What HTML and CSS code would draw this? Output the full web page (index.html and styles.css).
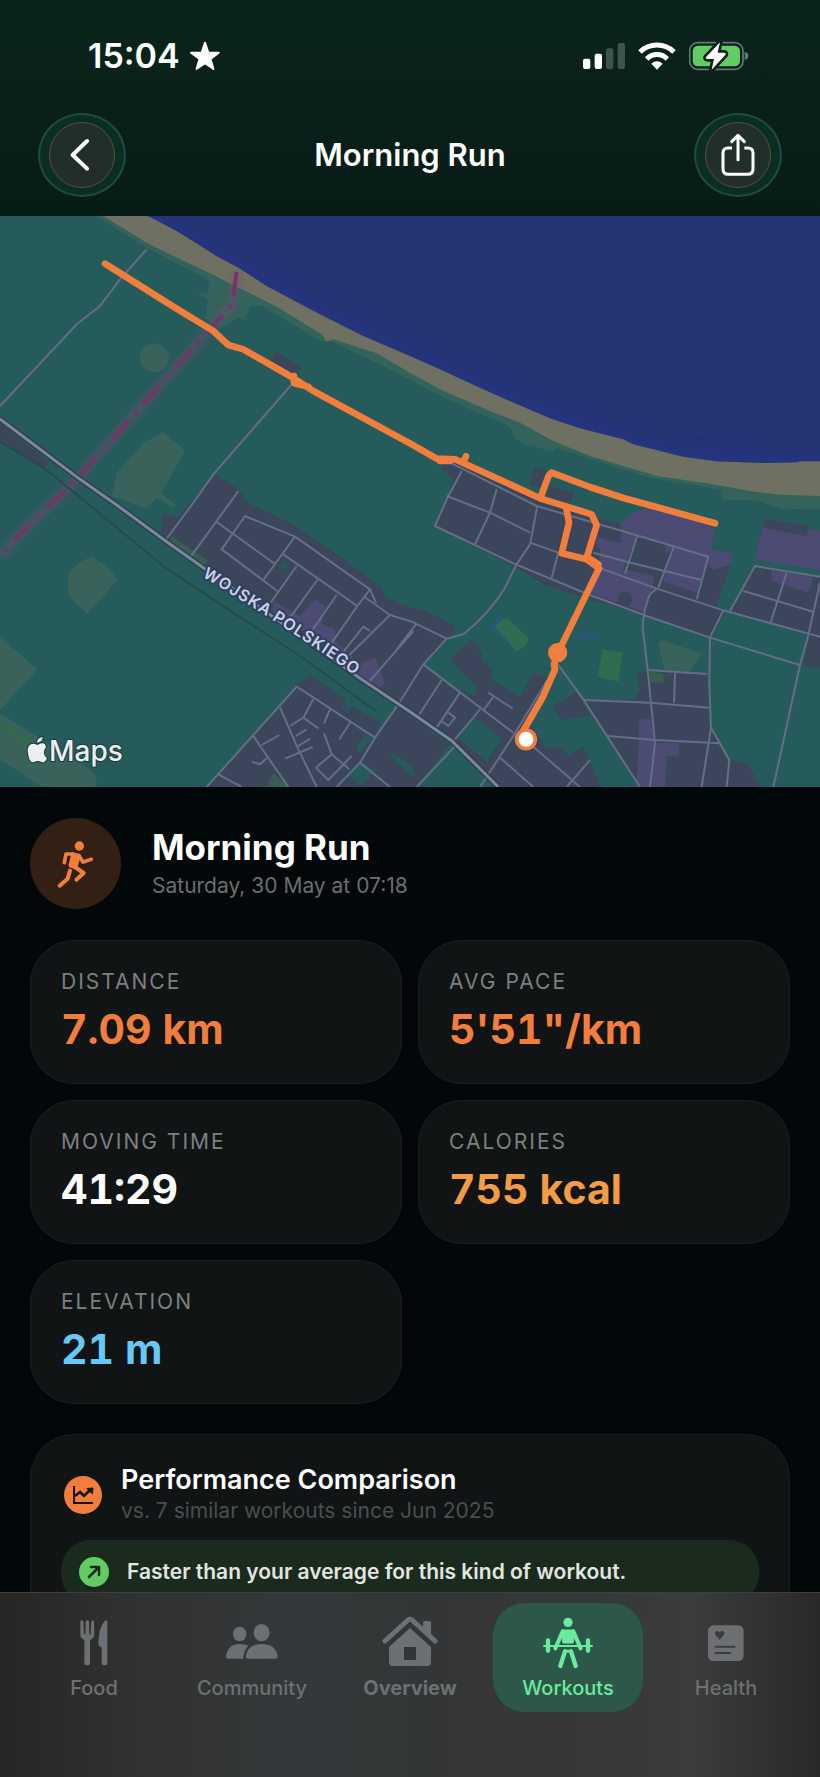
FILE: index.html
```html
<!DOCTYPE html>
<html lang="en">
<head>
    <meta charset="utf-8">
    <meta name="viewport" content="width=device-width, initial-scale=1">
    <title>Morning Run</title>
    <link rel="stylesheet" href="styles.css">
</head>
<body>
    <header>
        <div class="status-bar">
            <div class="status-left">
                <span class="time">15:04</span>
                <svg width="32" height="30" viewBox="500 58 94 92" fill="#fff" stroke="#fff" stroke-width="6" stroke-linejoin="round"><path d="M547 63 L557 93 L589 94 L564 113 L573 144 L547 126 L521 144 L530 113 L504 94 L537 93 Z"/></svg>
            </div>
            <div class="status-right">
                <svg width="42" height="28" viewBox="66 63 126 84" fill="#fff">
                    <rect x="66" y="113" width="22" height="31" rx="6"/>
                    <rect x="101" y="98" width="22" height="46" rx="6"/>
                    <rect x="135" y="82" width="22" height="62" rx="6" opacity=".22"/>
                    <rect x="170" y="66" width="22" height="78" rx="6" opacity=".22"/>
                </svg>
                <svg width="38" height="28" viewBox="232 62 114 84" fill="none" stroke="#fff" stroke-width="15">
                    <path d="M238 92 A73 73 0 0 1 340 92"/>
                    <path d="M258 113 A43 43 0 0 1 320 113"/>
                    <path d="M272 127 Q289 113 306 127 L289 145 Z" fill="#fff" stroke="none"/>
                </svg>
                <svg width="60" height="30" viewBox="387 60 180 90">
                    <rect x="389" y="65" width="160" height="80" rx="24" fill="none" stroke="#5f7a73" stroke-width="5"/>
                    <path d="M554 93 Q565 94 565 105 Q565 116 554 117 Z" fill="#5f7a73"/>
                    <rect x="398" y="74" width="142" height="62" rx="16" fill="#63cb63"/>
                    <path d="M480 64 L438 108 Q436 114 443 114 L462 114 L455 146 L496 102 Q499 95 492 95 L473 95 Z" fill="#fff" stroke="#0a2019" stroke-width="16" stroke-linejoin="round" paint-order="stroke"/>
                </svg>
            </div>
        </div>
        <div class="title-bar">
            <button class="round-button" aria-label="Back">
                <span><svg width="24" height="34" viewBox="150 353 72 102" fill="none" stroke="#fff" stroke-width="12" stroke-linecap="round" stroke-linejoin="round"><path d="M201 362 L158 404 L201 445"/></svg></span>
            </button>
            <h2>Morning Run</h2>
            <button class="round-button" aria-label="Share">
                <span><svg width="34" height="44" viewBox="482 342 102 132" fill="none" stroke="#fff" stroke-width="9" stroke-linecap="round" stroke-linejoin="round"><path d="M515 387 H503 Q488 387 488 402 V450 Q488 466 504 466 H562 Q578 466 578 450 V402 Q578 387 563 387 H552" stroke-linecap="butt"/><path d="M533 422 V350 M514 368 L533 349 L552 368"/></svg></span>
            </button>
        </div>
    </header>

    <main>
        <svg class="map" viewBox="0 0 2460 1713" role="img" aria-label="Map of the route">
            <defs>
                <path id="street" d="M606 1082 Q835 1216 1100 1402"/>
                <filter id="glow"><feGaussianBlur stdDeviation="6"/></filter>
                <filter id="shore"><feGaussianBlur stdDeviation="22"/></filter>
                <clipPath id="seaClip"><path d="M445 0 L530 45 L650 120 L715 155 L800 210 L960 295 L1090 360 L1230 420 L1310 455 L1440 515 L1530 555 L1650 607 L1740 637 L1870 670 L1900 685 L2050 722 L2150 736 L2300 741 L2390 739 L2400 736 L2460 736 V0 Z"/></clipPath>
            </defs>
            <rect width="2460" height="1713" fill="#255b5a"/>

            <!-- beach and sea -->
            <path d="M290 0 L440 95 L600 178 L626 195 L618 308 L640 320 L660 340 L712 305 L735 312 L750 270 L782 268 L960 374 L1000 378 L1230 492 L1330 545 L1530 632 L1545 665 L1570 683 L1660 707 L1670 697 L1950 785 L2165 822 L2165 850 L2270 855 L2350 880 L2460 878 V700 L1230 400 L460 0 Z" fill="#33635a"/>
            <path d="M592 235 L625 230 L625 250 Z" fill="#33635a"/>
            <path d="M310 0 L440 80 L520 120 L630 172 L710 212 L830 272 L965 355 L978 376 L1000 370 L1130 412 L1230 470 L1330 525 L1470 585 L1560 620 L1660 675 L1770 720 L1970 780 L2130 803 L2250 825 L2340 836 L2460 840 V600 L1230 300 L440 0 Z" fill="#6e7062"/>
            <g clip-path="url(#seaClip)">
                <rect width="2460" height="800" fill="#253474"/>
                <path d="M445 0 L715 155 L960 295 L1230 420 L1530 555 L1870 680 L2050 722 L2300 741 H2460" fill="none" stroke="#253588" stroke-width="40" opacity=".8" filter="url(#shore)"/>
            </g>

            <!-- fields -->
            <g fill="#38625a">
                <circle cx="463" cy="426" r="44"/>
                <path d="M490 648 L555 703 L485 832 L530 869 L515 872 L470 845 L440 877 L410 868 L335 840 L350 770 L430 680 Z"/>
                <path d="M203 1075 Q240 1030 275 1024 L305 1040 L355 1090 L262 1194 L215 1150 Q200 1130 203 1075 Z"/>
                <path d="M0 1264 L113 1360 L10 1472 L0 1480 Z"/>
                <path d="M0 1492 L270 1660 Q300 1680 285 1713 H125 L0 1630 Z"/>
                <path d="M1985 1272 L2105 1312 L2070 1368 H1995 L1975 1285 Z"/>
            </g>
            <path d="M15 1520 L95 1575 L75 1585 L5 1535 Z" fill="#2f6b4c"/>

            <!-- built-up areas -->
            <g fill="#3b465a">
                <path d="M0 622 L150 740 L130 757 L0 678 Z"/>
                <path d="M828 405 L904 452 L888 482 L810 435 Z"/>
                <path d="M650 778 L715 820 L745 862 L880 925 L1140 1108 L1155 1142 L1230 1176 L1270 1182 L1360 1227 L1365 1257 L1340 1272 L1270 1345 L1350 1405 L1425 1442 L1430 1412 L1350 1332 L1415 1270 L1445 1312 L1445 1332 L1480 1362 L1470 1387 L1560 1442 L1600 1372 L1640 1382 L1590 1520 L1640 1600 L1680 1592 L1705 1620 L1750 1592 L1770 1630 L1800 1713 H1495 L1355 1574 L1230 1487 L1080 1387 L610 1060 L480 970 L490 890 L530 905 L570 860 Z"/>
                <path d="M890 1407 L930 1379 L1035 1450 L1035 1490 L1055 1470 L1140 1517 L1125 1560 L1195 1465 L1230 1500 L1350 1585 L1250 1713 H615 L760 1560 L840 1475 Z"/>
                <path d="M1305 930 L1340 850 L1360 790 L1325 760 L1325 742 L1370 738 L1480 790 L1600 840 L1780 905 L1880 925 L1930 875 L2145 945 L2135 1000 L2195 1010 L2190 1050 L2150 1170 L2175 1185 L2135 1265 L1935 1200 L1640 1110 L1540 1050 Z"/>
                <path d="M1605 752 L1640 762 L1630 815 L1585 807 Z M1650 810 L1722 828 L1712 865 L1640 840 Z"/>
                <path d="M2265 1050 L2460 1085 V1355 L2410 1350 L2425 1258 L2190 1185 Z"/>
                <path d="M1658 1470 L1730 1427 L1770 1500 L1685 1512 Z"/>
                <path d="M1750 1452 H1900 L1920 1425 L1910 1367 L2120 1372 L2130 1540 L2190 1630 L2240 1642 L2285 1713 H1920 L1830 1572 Z"/>
            </g>
            <g fill="#4c4b73">
                <path d="M1860 920 L1900 890 L1940 875 L2145 935 L2135 1000 L2197 1012 L2192 1045 L2140 1062 L2120 1040 L2105 1085 L2090 1130 L1990 1098 L2015 1000 L2000 1010 L1910 962 L1870 1060 L1960 1080 L1960 1105 L1935 1190 L1770 1130 L1800 1050 L1800 1000 L1785 985 L1800 950 L1865 980 Z"/>
                <path d="M2290 918 L2460 945 V1062 L2265 1032 Z"/>
                <path d="M2315 1062 L2440 1085 L2425 1130 L2315 1095 Z"/>
                <path d="M1918 1512 L1950 1507 L1965 1582 L2038 1580 L2035 1617 L2000 1622 L1995 1713 H1910 Z"/>
                <path d="M820 1155 L900 1200 L945 1150 L975 1170 L965 1225 L1005 1240 L1005 1275 L1080 1345 L1125 1325 L1155 1400 L1140 1415 L1080 1380 L960 1275 L820 1190 Z"/>
            </g>
            <g fill="#3b465a">
                <path d="M2290 908 L2425 930 L2420 960 L2290 935 Z M1795 930 L1865 952 L1858 982 L1790 962 Z M1910 962 L2000 985 L1990 1058 L1885 1030 Z"/>
                <circle cx="1875" cy="1150" r="22"/>
            </g>
            <g fill="#255b5a">
                <path d="M1420 1502 L1505 1567 L1460 1637 L1375 1567 Z M1085 1635 L1125 1665 L1085 1710 L1045 1680 Z M1100 1545 L1120 1560 L1080 1610 L1065 1600 Z M1180 1610 L1240 1655 V1685 L1170 1620 Z M855 1028 L865 1050 L850 1062 L835 1050 Z"/>
            </g>
            <path d="M515 960 L625 1035 L615 1050 L505 978 Z M820 1672 L865 1713 H800 Z M1950 1367 L1990 1375 V1400 L1950 1397 Z" fill="#36654f" opacity=".8"/>
            <path d="M1495 1195 L1590 1270 L1550 1310 L1470 1235 Z M1730 1250 H1790 V1270 H1730 Z" fill="#285677"/>
            <path d="M1520 1205 L1585 1265 Q1590 1290 1550 1305 L1485 1235 Q1490 1215 1520 1205 Z M1808 1300 L1868 1310 L1855 1397 L1793 1382 Z" fill="#2f6c50"/>

            <!-- boundary -->
            <path d="M710 167 L697 265 L545 435 L230 790 L60 955 L0 1025" fill="none" stroke="#82487a" stroke-width="34" opacity=".32" filter="url(#glow)"/>
            <path d="M710 167 L697 265 L545 435 L230 790 L60 955 L0 1025" fill="none" stroke="#743568" stroke-width="12" stroke-dasharray="74 28 12 28"/>

            <!-- roads -->
            <path d="M0 677 L130 755 L250 852 L490 1050 L700 1190 L900 1320 L1130 1487" fill="none" stroke="#274a4c" stroke-width="6"/>
            <g fill="none" stroke="#646e86" stroke-width="6" stroke-linejoin="round">
                <path d="M0 570 L230 325 L300 270 L360 190 L440 100"/>
                <path d="M875 505 L640 775 L575 867 L497 972 M715 825 L690 860 L570 1025 M650 918 L825 1044"/>
                <path d="M885 962 L735 900 L665 1000 L832 1125 M885 962 L790 1092 M885 962 L1110 1120 L1128 1160 M850 1015 L1072 1170 L1110 1120 M890 1050 L805 1170 M952 1092 L870 1205 M1010 1137 L925 1260 M1072 1170 L985 1295 M1090 1140 L1170 1197 L1045 1320 L1032 1305 L1090 1232 L1110 1245 M1170 1197 L1235 1217 L1340 1268 M1240 1245 L1105 1400 M1250 1222 L1190 1300"/>
                <path d="M620 1713 L890 1412 L1125 1565 L1195 1465 L1270 1345 L1340 1268 L1390 1255 Q1470 1190 1515 1115 L1550 1045 L1590 985 L1612 870"/>
                <path d="M840 1475 L895 1600 L950 1713 M760 1560 L865 1713 M655 1675 L725 1713 M940 1450 L910 1505 L955 1537 M910 1505 L870 1530 M990 1480 L972 1522 M1052 1517 L1018 1570 M785 1587 L838 1557 M888 1560 L920 1540 M895 1590 L930 1568 M855 1628 L938 1593 M972 1552 L995 1615 L948 1655 L985 1692 L1055 1620 M995 1615 L1048 1660 M755 1637 L780 1645 L802 1625 M1125 1565 L1080 1640 L1010 1713 M1080 1640 L1170 1713"/>
                <path d="M1385 765 L1340 850 L1305 930 L1540 1042 L1770 1137 L1940 1200 L2130 1265 L2400 1347 M1340 840 L1470 890 L1590 950 M1490 820 L1470 890 L1425 985 M1350 740 L1610 870 L1900 955 L2125 1022 L2090 1150 M1590 980 L1675 1010 M1675 1010 L1655 1085 M1780 1010 L1880 1037 L2105 1092 M1912 960 L1875 1072 M2022 990 L1975 1115 M1795 1055 L1970 1118 L2170 1183 L2460 1262"/>
                <path d="M1970 1118 L1950 1135 Q1930 1180 1928 1235 L1943 1362 L1965 1580 L1950 1713 M2170 1183 L2130 1265 L2128 1400 L2133 1535 L2105 1713 M2133 1535 L2188 1632 L2180 1713 M1943 1362 L2120 1374 M2025 1370 L2022 1460 M1750 1452 L1950 1460 L2128 1475 M1825 1560 L1965 1572 L2160 1582"/>
                <path d="M2190 1185 L2265 1050 L2460 1082 M2230 1125 L2440 1187 M2360 1070 L2310 1225 M2460 1100 L2425 1258 L2400 1347 L2320 1713"/>
                <path d="M1670 1340 L1750 1450 L1920 1713 M1640 1395 L1540 1560 L1440 1713 M1500 1625 L1600 1713 M1600 1592 L1740 1713 M1770 1632 L1700 1713 M1270 1345 L1540 1550 M1325 1392 L1255 1500 M1380 1430 L1310 1535 M1440 1480 L1365 1570 M1465 1430 L1538 1478 M1482 1440 L1452 1480 M1370 1585 L1250 1713 M1345 1490 L1365 1505 L1345 1530 L1325 1515"/>
            </g>
            <path d="M0 609 L240 790 L350 867 L497 975 L610 1055 L1080 1387 L1230 1487 L1355 1574 L1495 1713" fill="none" stroke="#2c3d50" stroke-width="17"/>
            <path d="M0 609 L240 790 L350 867 L497 975 L610 1055 L1080 1387 L1230 1487 L1355 1574 L1495 1713" fill="none" stroke="#7b889c" stroke-width="9"/>
            <text class="street-name"><textPath href="#street">WOJSKA POLSKIEGO</textPath></text>

            <!-- route -->
            <g fill="none" stroke="#f27e3e" stroke-width="20" stroke-linecap="round" stroke-linejoin="round">
                <path d="M315 143 L520 272 L640 345 L685 387 L730 400 L870 480 L940 525 L1230 682 L1310 728 L1365 730 L1480 782 L1620 847 L1775 895 L1790 927 L1760 1025"/>
                <path d="M882 480 L882 502 L925 512 M1390 737 L1398 721 M1320 735 H1350"/>
                <path d="M1622 843 L1646 779 L1655 770 L1770 813 L1870 846 L1980 876 L2145 922"/>
                <path d="M1700 882 L1707 920 L1685 1012 L1760 1030 L1797 1057 L1673 1312 L1662 1345 L1665 1360 L1630 1440 L1568 1548"/>
                <path d="M1760 1022 L1795 1045"/>
            </g>
            <circle cx="1673" cy="1310" r="29" fill="#f27e3e"/>
            <circle cx="1578" cy="1570" r="28" fill="#fff" stroke="#f27e3e" stroke-width="11"/>

            <!-- attribution -->
            <path d="M113 1587 Q121 1580 130 1582 Q137 1584 138 1594 Q130 1602 132 1612 Q133 1622 141 1626 Q134 1643 125 1638 Q113 1631 101 1639 Q86 1640 83 1604 Q84 1583 100 1583 Q107 1584 113 1587 Z M111 1580 Q111 1566 128 1563 Q128 1578 111 1580 Z" class="logo"/>
            <text class="maps" x="147" y="1636">Maps</text>
        </svg>

        <section class="heading">
            <div class="avatar">
                <svg width="40" height="50" viewBox="170 145 120 150" fill="none" stroke="#f27e3e" stroke-linecap="round" stroke-linejoin="round">
                    <circle cx="240" cy="166" r="14" fill="#f27e3e" stroke="none"/>
                    <path d="M222 192 L214 224 L228 228 L238 196 Z" fill="#f27e3e" stroke-width="13"/>
                    <path d="M222 190 L200 190 L195 216" stroke-width="11"/>
                    <path d="M238 194 L251 214 L276 206" stroke-width="11"/>
                    <path d="M222 226 L253 247 L231 267" stroke-width="12"/>
                    <path d="M212 240 L205 264 L181 285" stroke-width="12"/>
                </svg>
            </div>
            <div>
                <h1>Morning Run</h1>
                <p class="date">Saturday, 30 May at 07:18</p>
            </div>
        </section>

        <section class="stats">
            <div class="card">
                <p class="label">DISTANCE</p>
                <p class="value orange">7.09 km</p>
            </div>
            <div class="card">
                <p class="label">AVG PACE</p>
                <p class="value orange">5'51"/km</p>
            </div>
            <div class="card">
                <p class="label">MOVING TIME</p>
                <p class="value">41:29</p>
            </div>
            <div class="card">
                <p class="label">CALORIES</p>
                <p class="value amber">755 kcal</p>
            </div>
            <div class="card">
                <p class="label">ELEVATION</p>
                <p class="value blue">21 m</p>
            </div>
        </section>

        <section class="card comparison">
            <div class="comparison-head">
                <svg width="38" height="38" viewBox="0 0 38 38" fill="none" stroke="#15150f" stroke-width="2">
                    <circle cx="19" cy="19" r="19" fill="#f27e3e" stroke="none"/>
                    <path d="M10 10 V27 H29"/>
                    <path d="M11 20 L16 16 L20 20 L26 14" stroke-width="2.5"/>
                    <path d="M23 12.500 L29 12 L28.500 18 Z" fill="#15150f" stroke-width="1"/>
                </svg>
                <div>
                    <h3>Performance Comparison</h3>
                    <p class="subtitle">vs. 7 similar workouts since Jun 2025</p>
                </div>
            </div>
            <div class="verdict">
                <svg width="30" height="30" viewBox="0 0 30 30" fill="none" stroke="#1a2b1c" stroke-width="2.500" stroke-linecap="round" stroke-linejoin="round">
                    <circle cx="15" cy="15" r="15" fill="#63cb63" stroke="none"/>
                    <path d="M10 20 L20 10 M12 10 H20 V18"/>
                </svg>
                <p>Faster than your average for this kind of workout.</p>
            </div>
        </section>
    </main>

    <nav>
        <a href="#food">
            <svg width="56" height="56" viewBox="200 77 168 168" fill="currentColor">
                <path d="M243 97 Q247 89 252 97 L254 135 H258 L259 97 Q264 89 269 97 L270 135 H274 L276 97 Q281 89 284 97 L285 135 Q285 148 272 152 V220 Q272 228 263 228 Q255 228 255 220 V152 Q243 148 243 135 Z"/>
                <path d="M324 97 V221 Q324 228 315 228 Q307 228 307 221 V174 Q297 171 297 163 Q298 112 317 94 Q323 92 324 97 Z"/>
            </svg>
            Food
        </a>
        <a href="#community">
            <svg width="56" height="56" viewBox="672 77 168 168" fill="currentColor">
                <ellipse cx="719" cy="134" rx="20" ry="22"/>
                <ellipse cx="785" cy="130" rx="24" ry="26"/>
                <path d="M678 200 Q684 164 719 164 Q733 164 745 170 Q731 184 729 208 H686 Q678 208 678 200 Z"/>
                <path d="M737 200 Q744 164 785 164 Q826 164 833 200 Q833 208 825 208 H745 Q737 208 737 200 Z"/>
            </svg>
            Community
        </a>
        <a href="#overview" class="bold">
            <svg width="56" height="56" viewBox="382 1617 56 56" fill="currentColor">
                <path d="M385 1643 L408 1622 Q410 1620 412 1622 L435 1643" fill="none" stroke="currentColor" stroke-width="5" stroke-linecap="round" stroke-linejoin="round"/>
                <path d="M423 1632 V1625 Q423 1623 425 1623 H429 Q431 1623 431 1625 V1639 Z"/>
                <path fill-rule="evenodd" d="M410 1630 L431 1649 V1664 Q431 1668 427 1668 H393 Q389 1668 389 1664 V1649 Z M404 1649 V1662 H416 V1649 Z"/>
            </svg>
            Overview
        </a>
        <a href="#workouts" class="active" aria-current="page">
            <svg width="56" height="56" viewBox="389 77 168 168" fill="currentColor" stroke="currentColor" stroke-linecap="round" stroke-linejoin="round">
                <circle cx="473" cy="99" r="14" stroke="none"/>
                <path d="M459 125 H487 L486 158 H460 Z" stroke-width="9"/>
                <path d="M457 126 L435 177 M489 126 L511 177" fill="none" stroke-width="12"/>
                <path d="M401 170 H545" fill="none" stroke-width="6"/>
                <path d="M413 153 V184 M533 153 V184" fill="none" stroke-width="13"/>
                <path d="M464 186 L450 230 M482 186 L496 230" fill="none" stroke-width="13"/>
                <path d="M458 187 L464 181 H482 L488 187 L473 190 Z" stroke="none"/>
            </svg>
            Workouts
        </a>
        <a href="#health">
            <svg width="56" height="56" viewBox="863 77 168 168" fill="currentColor">
                <rect x="893" y="108" width="107" height="107" rx="16"/>
                <path d="M928 151 L916 138 Q911 130 917 126 Q924 122 928 130 Q932 122 939 126 Q945 130 940 138 Z" fill="#3b3d3d"/>
                <path d="M916 172 H973 M916 191 H960" fill="none" stroke="#3b3d3d" stroke-width="6" stroke-linecap="round"/>
            </svg>
            Health
        </a>
    </nav>
</body>
</html>
```
FILE: styles.css
```css
* {
    box-sizing: border-box;
}
body {
    margin: 0;
    height: 100vh;
    display: flex;
    flex-direction: column;
    overflow: hidden;
    font-family: Inter, 'Liberation Sans', sans-serif;
    color: #fff;
    background: linear-gradient(#020c07, #020709 55%, #010607);
}
h1, h2, h3, p {
    margin: 0;
}
svg {
    display: block;
    flex-shrink: 0;
}
header {
    flex-shrink: 0;
    padding-bottom: 19px;
    background: linear-gradient(#0a241b, #081c17);
}
.status-bar {
    height: 112px;
    padding: 0 71px 0 88px;
    display: flex;
    align-items: center;
    justify-content: space-between;
}
.status-left {
    display: flex;
    align-items: center;
    gap: 9px;
}
.time {
    font-size: 34px;
    font-weight: 600;
    line-height: 40px;
}
.status-right {
    display: flex;
    align-items: center;
    gap: 13px;
}
.title-bar {
    height: 85px;
    padding: 0 38px;
    display: flex;
    align-items: center;
    justify-content: space-between;
}
h2 {
    font-size: 31px;
    font-weight: 600;
}
.round-button {
    width: 88px;
    height: 84px;
    padding: 0;
    display: flex;
    align-items: center;
    justify-content: center;
    border: 2px solid #1f4c3d;
    border-radius: 50%;
    background: #0b2e24;
}
.round-button span {
    width: 66px;
    height: 66px;
    display: flex;
    align-items: center;
    justify-content: center;
    border: 1px solid #5c4d38;
    border-radius: 50%;
    background: #222e2a;
}
main {
    flex: 1;
    min-height: 0;
    overflow-y: auto;
    scrollbar-width: none;
}
.map {
    width: 100%;
    height: auto;
}
.street-name {
    font-size: 48px;
    font-weight: 600;
    letter-spacing: 3px;
    fill: #c9d3ec;
    stroke: #333f5c;
    stroke-width: 12px;
    stroke-linejoin: round;
    paint-order: stroke;
}
.maps {
    font-size: 84px;
    font-weight: 500;
    fill: #eaf0f0;
    stroke: #1c3b3c;
    stroke-width: 6px;
    paint-order: stroke;
}
.logo {
    fill: #eaf0f0;
    stroke: #1c3b3c;
    stroke-width: 6px;
    paint-order: stroke;
}
.heading {
    padding: 31px 30px;
    display: flex;
    align-items: center;
    gap: 31px;
}
.avatar {
    width: 91px;
    height: 91px;
    display: flex;
    align-items: center;
    justify-content: center;
    border-radius: 50%;
    background: #332014;
}
h1 {
    font-size: 35px;
    font-weight: 700;
    line-height: 44px;
}
.date {
    font-size: 21px;
    line-height: 34px;
    color: #6b6e6e;
}
.stats {
    padding: 0 30px;
    display: grid;
    grid-template-columns: 1fr 1fr;
    gap: 16px;
}
.card {
    padding: 29px 30px;
    border: 1px solid #1a1e1d;
    border-radius: 44px;
    background: #111414;
}
.label {
    margin-bottom: 10px;
    font-size: 21px;
    line-height: 24px;
    letter-spacing: 2px;
    color: #7d8080;
}
.value {
    font-size: 41px;
    font-weight: 700;
    line-height: 50px;
    font-variant-numeric: tabular-nums;
}
.orange {
    color: #f27e3e;
}
.amber {
    color: #f39b45;
}
.blue {
    color: #67c8f7;
}
.comparison {
    margin: 30px 30px 40px;
}
.comparison-head {
    display: flex;
    align-items: center;
    gap: 19px;
    padding-left: 3px;
    margin-bottom: 14px;
}
h3 {
    font-size: 27px;
    font-weight: 600;
    line-height: 32px;
}
.subtitle {
    font-size: 21px;
    line-height: 30px;
    color: #4b4e4e;
}
.verdict {
    padding: 17px 18px;
    display: flex;
    align-items: center;
    gap: 18px;
    border-radius: 30px;
    background: #1a2b1d;
    font-size: 21px;
    font-weight: 600;
    line-height: 30px;
    color: #e1e6e1;
}
nav {
    height: 185px;
    flex-shrink: 0;
    padding: 10px 19px 0;
    display: flex;
    align-items: flex-start;
    gap: 8px;
    border-top: 1px solid #3d403e;
    background: linear-gradient(90deg, #262725, #313230 16%, #34383a 35%, #333636 52%, #353836 70%, #3b3c3b 84%, #282928);
}
nav a {
    flex: 1 1 0;
    min-width: 0;
    height: 109px;
    padding-top: 12px;
    border-radius: 32px;
    display: flex;
    flex-direction: column;
    align-items: center;
    gap: 5px;
    font-size: 20px;
    font-weight: 500;
    line-height: 24px;
    color: #6d7072;
    text-decoration: none;
}
nav a.bold {
    font-weight: 700;
}
nav a.active {
    color: #6aeb9d;
    background: #2d5849;
}
```
